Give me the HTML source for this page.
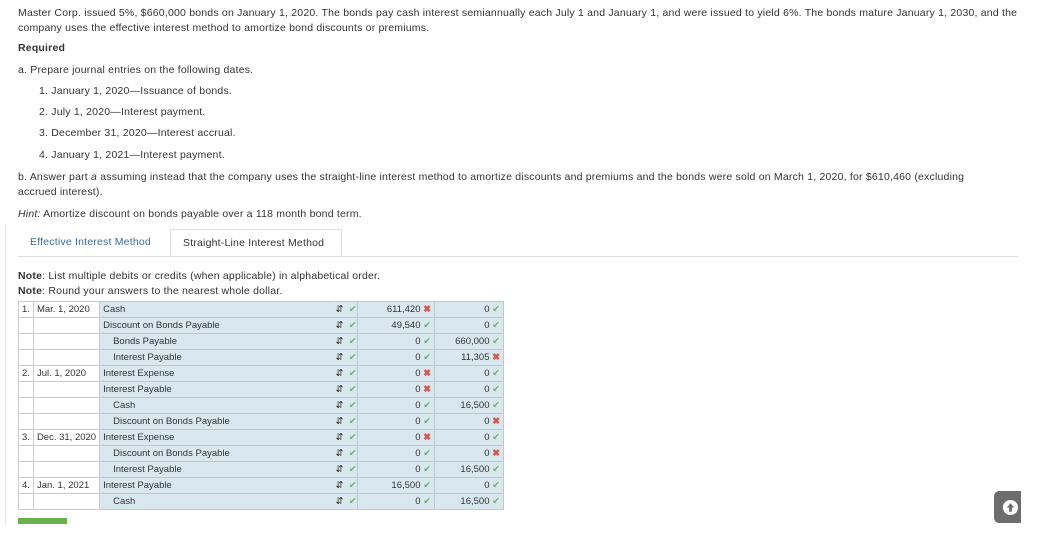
<!DOCTYPE html>
<html><head><meta charset="utf-8"><style>
body{margin:0;width:1041px;height:547px;background:#fff;font-family:"Liberation Sans",sans-serif;color:#333;font-size:10.5px;position:relative;overflow:hidden;letter-spacing:0.2px}
.t{position:absolute;white-space:nowrap}
.tabs{position:absolute;left:18px;top:229px;width:1000px;height:27px;border-bottom:1px solid #ddd}
.tab{position:absolute;top:0;height:27px;line-height:27px;font-size:10.5px}
table{position:absolute;left:18px;top:301px;border-collapse:collapse;font-size:9.5px;letter-spacing:0}
td{height:15px;padding:0 3px;border:1px solid #ccc;white-space:nowrap}
td.b{background:#d9e8ef;border-color:#bcc9cf}
td.a{border-left-color:#d9e8ef}
td.n{border-right-color:#d9e8ef}
.ck{color:#6bb36b}.x{color:#d9534f;font-weight:bold}
.r{text-align:right}
</style></head><body>
<div class="t" style="left:18px;top:6px;width:1005px;white-space:normal;line-height:15px">Master Corp. issued 5%, $660,000 bonds on January 1, 2020. The bonds pay cash interest semiannually each July 1 and January 1, and were issued to yield 6%. The bonds mature January 1, 2030, and the company uses the effective interest method to amortize bond discounts or premiums.</div>
<div class="t" style="left:18px;top:42px;font-weight:bold">Required</div>
<div class="t" style="left:18px;top:64px">a. Prepare journal entries on the following dates.</div>
<div class="t" style="left:39px;top:85px">1. January 1, 2020—Issuance of bonds.</div>
<div class="t" style="left:39px;top:106px">2. July 1, 2020—Interest payment.</div>
<div class="t" style="left:39px;top:127px">3. December 31, 2020—Interest accrual.</div>
<div class="t" style="left:39px;top:149px">4. January 1, 2021—Interest payment.</div>
<div class="t" style="left:18px;top:170px;width:995px;white-space:normal;line-height:15px">b. Answer part <i>a</i> assuming instead that the company uses the straight-line interest method to amortize discounts and premiums and the bonds were sold on March 1, 2020, for $610,460 (excluding<br>accrued interest).</div>
<div class="t" style="left:18px;top:208px"><i>Hint:</i> Amortize discount on bonds payable over a 118 month bond term.</div>
<div style="position:absolute;left:5px;top:225px;width:1px;height:300px;background:#e5e5e5"></div>
<div class="tabs">
<div class="tab" style="left:12px;color:#3a6d9a">Effective Interest Method</div>
<div class="tab" style="left:152px;width:172px;border:1px solid #ddd;border-bottom:1px solid #fff;height:27px;background:#fff;padding-left:12px;box-sizing:border-box">Straight-Line Interest Method</div>
</div>
<div class="t" style="left:18px;top:270px"><b>Note</b>: List multiple debits or credits (when applicable) in alphabetical order.</div>
<div class="t" style="left:18px;top:285px"><b>Note</b>: Round your answers to the nearest whole dollar.</div>
<table>
<colgroup><col style="width:14px"><col style="width:66px"><col style="width:235px"><col style="width:23px"><col style="width:77px"><col style="width:69px"></colgroup>
<tr><td>1.</td><td>Mar. 1, 2020</td><td class="b n">Cash</td><td class="b a" style="padding:0;text-align:center">&#8693;&nbsp; <span class="ck">✔</span></td><td class="b r">611,420 <span class="x">✖</span></td><td class="b r">0 <span class="ck">✔</span></td></tr>
<tr><td></td><td></td><td class="b n">Discount on Bonds Payable</td><td class="b a" style="padding:0;text-align:center">&#8693;&nbsp; <span class="ck">✔</span></td><td class="b r">49,540 <span class="ck">✔</span></td><td class="b r">0 <span class="ck">✔</span></td></tr>
<tr><td></td><td></td><td class="b n" style="padding-left:13px">Bonds Payable</td><td class="b a" style="padding:0;text-align:center">&#8693;&nbsp; <span class="ck">✔</span></td><td class="b r">0 <span class="ck">✔</span></td><td class="b r">660,000 <span class="ck">✔</span></td></tr>
<tr><td></td><td></td><td class="b n" style="padding-left:13px">Interest Payable</td><td class="b a" style="padding:0;text-align:center">&#8693;&nbsp; <span class="ck">✔</span></td><td class="b r">0 <span class="ck">✔</span></td><td class="b r">11,305 <span class="x">✖</span></td></tr>
<tr><td>2.</td><td>Jul. 1, 2020</td><td class="b n">Interest Expense</td><td class="b a" style="padding:0;text-align:center">&#8693;&nbsp; <span class="ck">✔</span></td><td class="b r">0 <span class="x">✖</span></td><td class="b r">0 <span class="ck">✔</span></td></tr>
<tr><td></td><td></td><td class="b n">Interest Payable</td><td class="b a" style="padding:0;text-align:center">&#8693;&nbsp; <span class="ck">✔</span></td><td class="b r">0 <span class="x">✖</span></td><td class="b r">0 <span class="ck">✔</span></td></tr>
<tr><td></td><td></td><td class="b n" style="padding-left:13px">Cash</td><td class="b a" style="padding:0;text-align:center">&#8693;&nbsp; <span class="ck">✔</span></td><td class="b r">0 <span class="ck">✔</span></td><td class="b r">16,500 <span class="ck">✔</span></td></tr>
<tr><td></td><td></td><td class="b n" style="padding-left:13px">Discount on Bonds Payable</td><td class="b a" style="padding:0;text-align:center">&#8693;&nbsp; <span class="ck">✔</span></td><td class="b r">0 <span class="ck">✔</span></td><td class="b r">0 <span class="x">✖</span></td></tr>
<tr><td>3.</td><td>Dec. 31, 2020</td><td class="b n">Interest Expense</td><td class="b a" style="padding:0;text-align:center">&#8693;&nbsp; <span class="ck">✔</span></td><td class="b r">0 <span class="x">✖</span></td><td class="b r">0 <span class="ck">✔</span></td></tr>
<tr><td></td><td></td><td class="b n" style="padding-left:13px">Discount on Bonds Payable</td><td class="b a" style="padding:0;text-align:center">&#8693;&nbsp; <span class="ck">✔</span></td><td class="b r">0 <span class="ck">✔</span></td><td class="b r">0 <span class="x">✖</span></td></tr>
<tr><td></td><td></td><td class="b n" style="padding-left:13px">Interest Payable</td><td class="b a" style="padding:0;text-align:center">&#8693;&nbsp; <span class="ck">✔</span></td><td class="b r">0 <span class="ck">✔</span></td><td class="b r">16,500 <span class="ck">✔</span></td></tr>
<tr><td>4.</td><td>Jan. 1, 2021</td><td class="b n">Interest Payable</td><td class="b a" style="padding:0;text-align:center">&#8693;&nbsp; <span class="ck">✔</span></td><td class="b r">16,500 <span class="ck">✔</span></td><td class="b r">0 <span class="ck">✔</span></td></tr>
<tr><td></td><td></td><td class="b n" style="padding-left:13px">Cash</td><td class="b a" style="padding:0;text-align:center">&#8693;&nbsp; <span class="ck">✔</span></td><td class="b r">0 <span class="ck">✔</span></td><td class="b r">16,500 <span class="ck">✔</span></td></tr>
</table>
<div style="position:absolute;left:18px;top:518px;width:49px;height:6px;background:#6ab04c"></div>
<div style="position:absolute;left:994px;top:491px;width:27px;height:32px;background:#6d6d6d;border-radius:5px 0 0 5px"></div>
<svg style="position:absolute;left:1002px;top:499px" width="17" height="17" viewBox="0 0 18 18"><circle cx="9" cy="9" r="8" fill="#fff"/><path d="M9 4.5 L13 9 H10.5 V13.5 H7.5 V9 H5 Z" fill="#6d6d6d"/></svg>
</body></html>
